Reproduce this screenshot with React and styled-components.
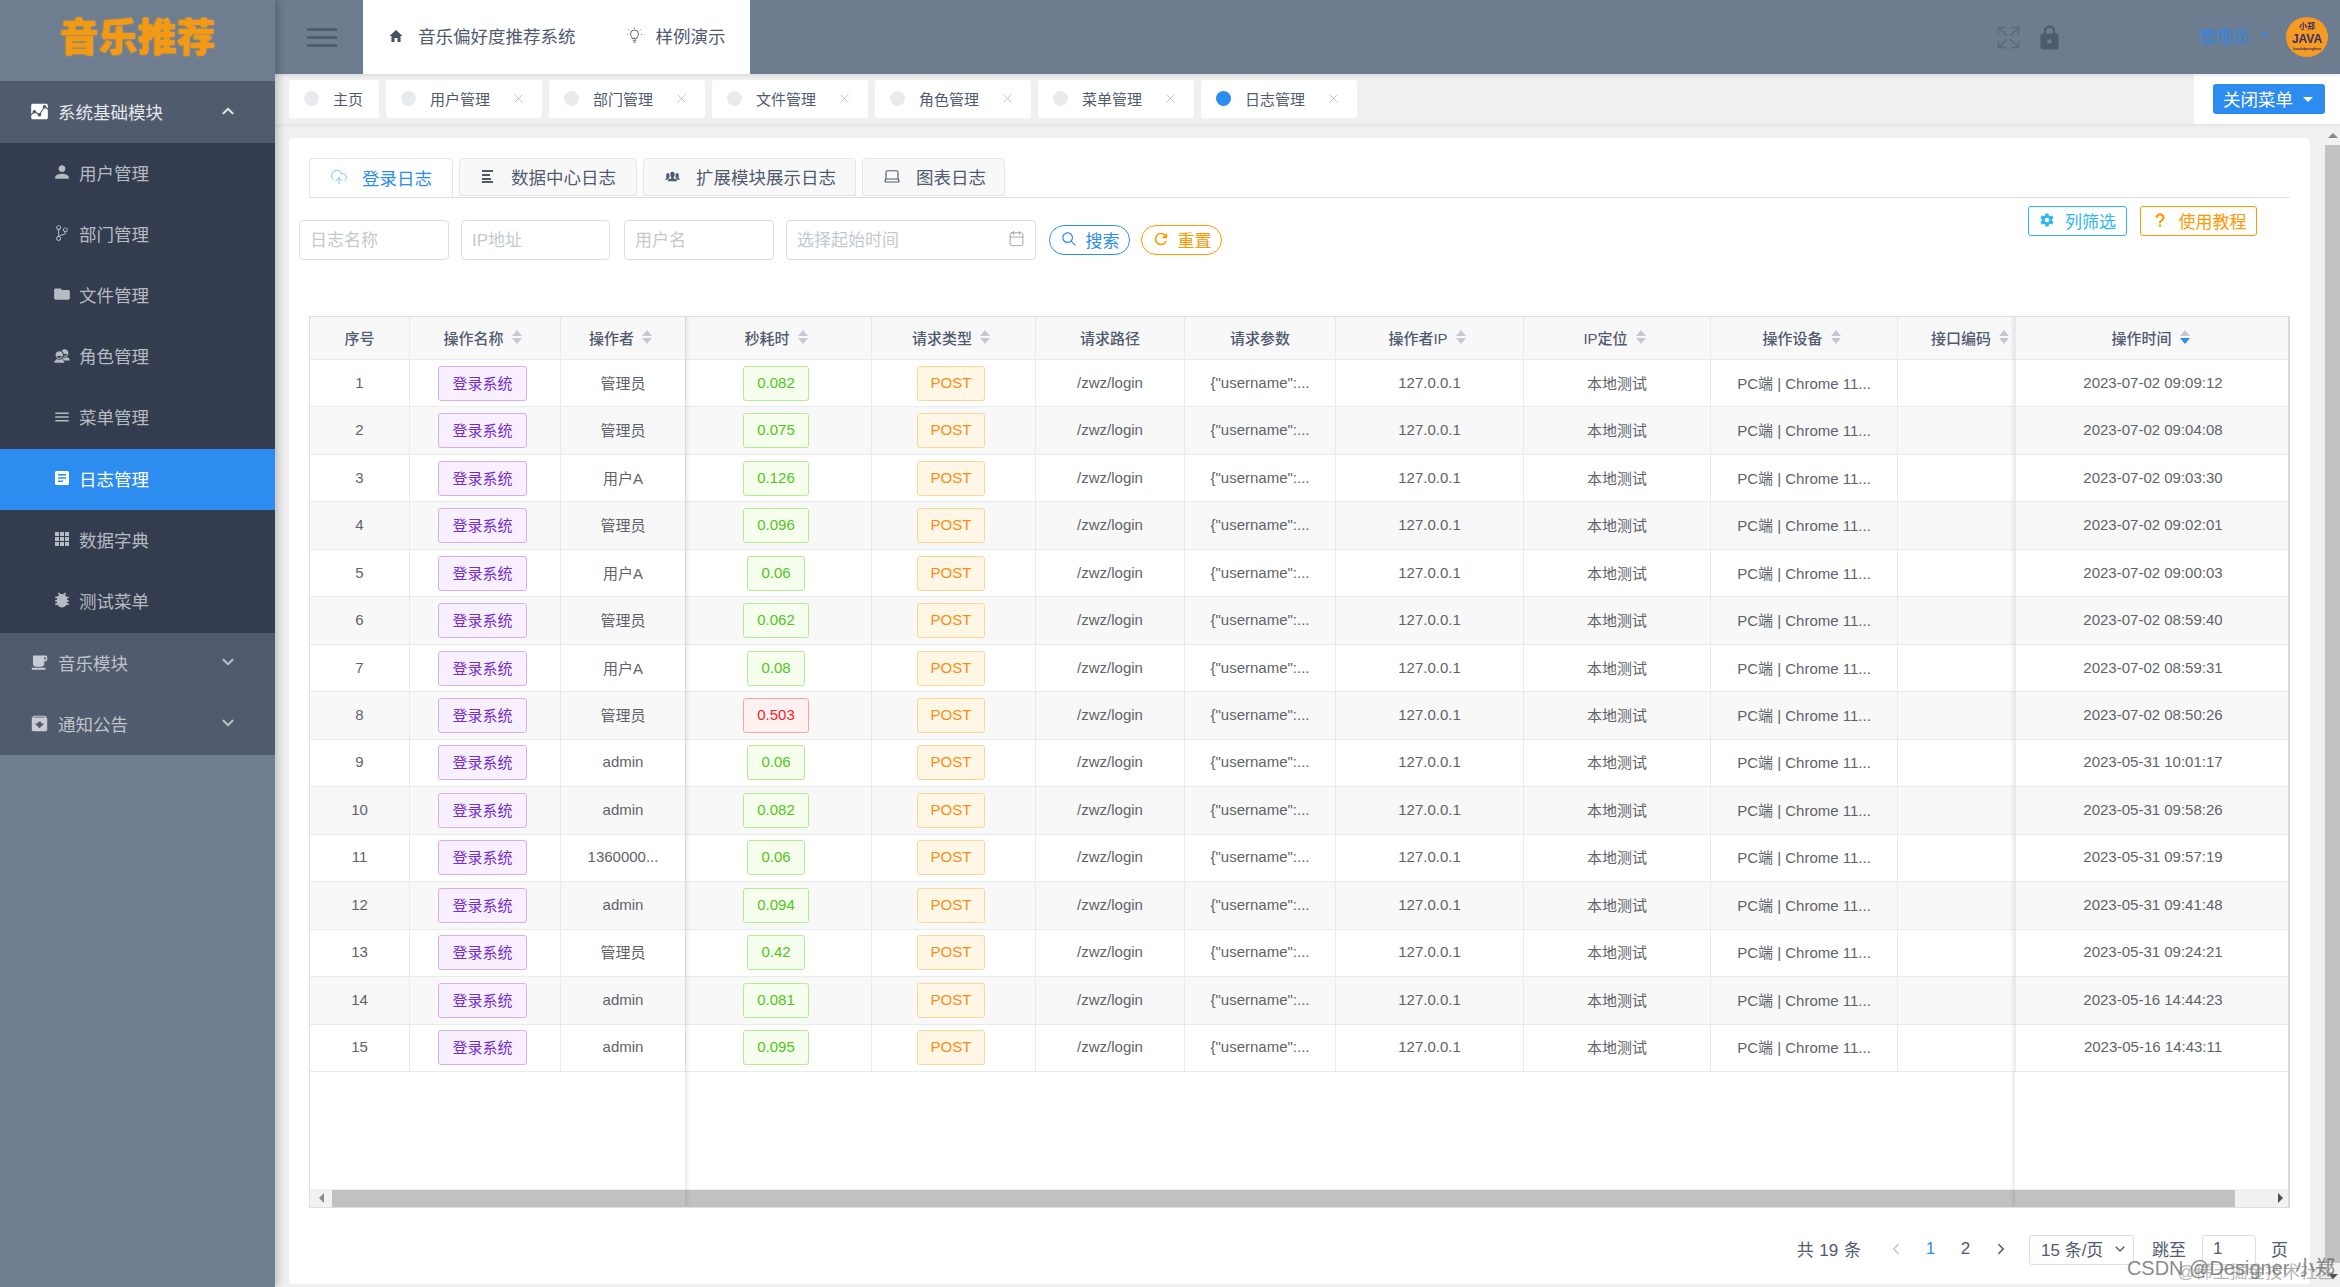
import React from "react";
import styled, { createGlobalStyle } from "styled-components";
import {
  IoMdAnalytics,
  IoMdPerson,
  IoIosGitBranch,
  IoMdFolder,
  IoMdContacts,
  IoMdMenu,
  IoMdBug,
  IoMdCafe,
  IoMdArchive,
  IoIosArrowUp,
  IoIosArrowDown,
  IoIosArrowBack,
  IoIosArrowForward,
  IoMdHome,
  IoMdLock,
  IoMdSettings,
  IoMdHelp,
  IoIosSearch,
  IoMdRefresh,
  IoIosPeople,
  IoIosExpand
} from "react-icons/io";
import { CloudUpload, Laptop, Calendar, X } from "lucide-react";

const FONT = '"Liberation Sans", "Noto Sans CJK SC", sans-serif';

const GlobalStyle = createGlobalStyle`
  html, body {
    margin: 0;
    height: 100%;
    overflow: hidden;
    background: #f0f0f0;
    font-family: ${FONT};
  }
  * {
    box-sizing: border-box;
  }
`;

const Page = styled.div`
  display: flex;
  width: 2340px;
  height: 1287px;
  position: relative;
  overflow: hidden;
`;

/* sidebar */
const Sidebar = styled.aside`
  flex: 0 0 275px;
  background: #6f7d90;
  box-shadow: 3px 0 8px rgba(0, 0, 0, 0.22);
  z-index: 3;
`;

const LogoBox = styled.div`
  height: 81px;
  display: flex;
  align-items: center;
  justify-content: center;
  padding-bottom: 6px;
`;

const LogoText = styled.span`
  color: #f39a12;
  font-size: 39px;
  font-weight: 900;
  line-height: 1;
  text-shadow: 0 0 2px #f6a623;
`;

const SectionHead = styled.div`
  height: ${p => (p.$tall ? "62px" : "61px")};
  display: flex;
  align-items: center;
  padding: 0 39px 2px 30px;
  background: #515b6e;
  color: ${p => (p.$open ? "#e6e8eb" : "#bfc3cb")};
  font-size: 17.5px;

  > svg:first-child {
    font-size: 19px;
    margin-right: 9px;
    color: ${p => (p.$open ? "#fff" : "#c9ccd2")};
  }
  > span {
    flex: 1;
  }
`;

const SubMenu = styled.div`
  background: #343d4f;
`;

const SubItem = styled.div`
  height: 61.2px;
  display: flex;
  align-items: center;
  padding: 0 0 3px 53px;
  font-size: 17.5px;
  color: ${p => (p.$active ? "#fff" : "#b5bac3")};
  background: ${p => (p.$active ? "#2d8cf0" : "transparent")};

  > svg {
    flex: 0 0 18px;
    font-size: 18px;
    margin-right: 8px;
  }
`;

/* top */
const Main = styled.div`
  flex: 1;
  min-width: 0;
  display: flex;
  flex-direction: column;
`;

const Header = styled.header`
  flex: 0 0 74px;
  display: flex;
  align-items: center;
  background: #6e7c8f;
  box-shadow: 0 1px 4px rgba(0, 0, 0, 0.12);
  z-index: 2;
`;

const Hamburger = styled.div`
  flex: 0 0 88px;
  height: 100%;
  display: flex;
  flex-direction: column;
  justify-content: center;
  gap: 5px;
  padding-left: 32px;
`;

const HamburgerBar = styled.i`
  display: block;
  width: 30px;
  height: 3px;
  background: #4f5c6e;
`;

const NavBox = styled.nav`
  flex: 0 0 387px;
  height: 100%;
  background: #fff;
  display: flex;
  align-items: center;
  padding: 0 0 3px 25px;
  font-size: 17.5px;
  color: #515a6e;
`;

const NavLink = styled.span`
  display: flex;
  align-items: center;
  margin-right: ${p => p.$gap || 0}px;

  > svg {
    margin-right: ${p => p.$iconGap}px;
  }
`;

const HeaderRight = styled.div`
  flex: 1;
  display: flex;
  align-items: center;
  justify-content: flex-end;
  padding-right: 12px;
`;

const ExpandIcon = styled(IoIosExpand)`
  font-size: 29px;
  color: #5c6a7c;
  margin-right: 12px;
`;

const LockIcon = styled(IoMdLock)`
  font-size: 29px;
  color: #4e5b6f;
  margin-right: 135px;
`;

const UserName = styled.span`
  color: #2d86e8;
  font-size: 17px;
  margin-top: -4px;
`;

const Caret = styled.i`
  display: block;
  width: 0;
  height: 0;
  border-left: ${p => p.$size || 4}px solid transparent;
  border-right: ${p => p.$size || 4}px solid transparent;
  border-top: ${p => p.$size || 4}px solid ${p => p.$color || "#2d86e8"};
  margin: ${p => p.$margin || "0"};
`;

const Avatar = styled.div`
  width: 42px;
  height: 40px;
  border-radius: 50%;
  background: #f59b23;
  color: #3c2f63;
  display: flex;
  flex-direction: column;
  align-items: center;
  justify-content: center;
  line-height: 1;
`;

const AvatarTop = styled.span`
  font-size: 8px;
  font-weight: 700;
`;

const AvatarMain = styled.span`
  font-size: 12px;
  font-weight: 700;
  margin: 2px 0;
`;

const AvatarFoot = styled.span`
  font-size: 4px;
  font-weight: 700;
`;

/* open pages strip */
const PageTabBar = styled.div`
  flex: 0 0 50px;
  display: flex;
  background: #f0f0f0;
  box-shadow: 0 2px 3px rgba(0, 0, 0, 0.05);
  z-index: 1;
`;

const PageTabs = styled.div`
  flex: 1;
  display: flex;
  gap: 7px;
  padding: 6px 0 0 14px;
`;

const PageTab = styled.div`
  height: 38px;
  display: flex;
  align-items: center;
  padding: 0 16px 2px 15px;
  background: #fff;
  border-radius: 3px;
  font-size: 15px;
  color: #515a6e;

  > svg {
    margin-left: 21px;
    color: #9ea3ab;
  }
`;

const PageDot = styled.i`
  width: 15px;
  height: 15px;
  border-radius: 50%;
  margin-right: 14px;
  background: ${p => (p.$active ? "#2d8cf0" : "#e8eaec")};
`;

const CloseBox = styled.div`
  flex: 0 0 146px;
  background: #fff;
  padding: 10px 0 0 19px;
`;

const CloseButton = styled.div`
  width: 112px;
  height: 30px;
  display: flex;
  align-items: center;
  padding: 0 0 2px 10px;
  background: #2d8cf0;
  border-radius: 3px;
  color: #fff;
  font-size: 17.5px;
`;

/* content */
const Body = styled.div`
  flex: 1;
  min-height: 0;
  display: flex;
`;

const CardArea = styled.div`
  flex: 1;
  min-width: 0;
  padding: 14px 15px 3px 14px;
`;

const Card = styled.main`
  height: 100%;
  background: #fff;
  border-radius: 4px;
  padding: 20px 20px 0;
  display: flex;
  flex-direction: column;
`;

const VScroll = styled.div`
  flex: 0 0 15px;
  background: #f1f1f1;
  display: flex;
  flex-direction: column;
  align-items: center;
`;

const VThumb = styled.div`
  width: 15px;
  height: 1118px;
  background: #c1c1c1;
`;

const UpArrow = styled.i`
  width: 0;
  height: 0;
  margin: 9px 0 7px;
  border-left: 5px solid transparent;
  border-right: 5px solid transparent;
  border-bottom: 5px solid #8a8a8a;
`;

const DownArrow = styled.i`
  width: 0;
  height: 0;
  margin-top: 11px;
  border-left: 5px solid transparent;
  border-right: 5px solid transparent;
  border-top: 5px solid #505050;
`;

const TabStrip = styled.div`
  flex: 0 0 39px;
  display: flex;
  gap: 6px;
  border-bottom: 1px solid #dcdee2;
`;

const TabItem = styled.div`
  height: ${p => (p.$active ? "39px" : "38px")};
  display: flex;
  align-items: center;
  padding: 0 ${p => p.$right || 20}px 2px 20px;
  border: 1px solid #e4e6ea;
  border-bottom: ${p => (p.$active ? "0" : "1px solid #e4e6ea")};
  border-radius: 4px 4px 0 0;
  background: ${p => (p.$active ? "#fff" : "#f8f8f9")};
  color: ${p => (p.$active ? "#2d8cf0" : "#515a6e")};
  font-size: 17.5px;

  > svg {
    margin-right: ${p => p.$gap || 15}px;
  }
`;

const FilterArea = styled.div`
  flex: 0 0 118px;
  display: flex;
  justify-content: space-between;
  align-items: flex-start;
`;

const FilterLeft = styled.div`
  display: flex;
  align-items: center;
  margin: 22px 0 0 -10px;
`;

const FilterRight = styled.div`
  display: flex;
  gap: 13px;
  margin: 8px 33px 0 0;
`;

const Field = styled.div`
  width: ${p => p.$width}px;
  height: 40px;
  margin-right: ${p => p.$gap}px;
  display: flex;
  align-items: center;
  justify-content: space-between;
  padding: 0 10px 3px;
  border: 1px solid #dcdee2;
  border-radius: 4px;
  color: #c5c8ce;
  font-size: 17px;
`;

const PillButton = styled.div`
  width: ${p => p.$width}px;
  height: 30px;
  margin-right: ${p => p.$gap || 0}px;
  display: flex;
  align-items: center;
  justify-content: center;
  gap: 8px;
  padding-bottom: 2px;
  border: 1px solid ${p => p.$color};
  border-radius: 15px;
  color: ${p => p.$color};
  font-size: 17px;
`;

const GhostButton = styled.div`
  width: ${p => p.$width}px;
  height: 30px;
  display: flex;
  align-items: center;
  justify-content: center;
  gap: 10px;
  padding-bottom: 2px;
  border: 1px solid ${p => p.$color};
  border-radius: 3px;
  color: ${p => p.$color};
  font-size: 17px;
`;

/* table */
const TableBox = styled.div`
  flex: 0 0 892px;
  position: relative;
  display: flex;
  flex-direction: column;
  border: 1px solid #dcdee2;
  border-right: 2px solid #d8dadd;
  overflow: hidden;
`;

const Row = styled.div`
  flex: 0 0 ${p => (p.$head ? "43px" : "47.47px")};
  display: flex;
  background: ${p => (p.$head || p.$striped ? "#f8f8f9" : "#fff")};
  border-bottom: 1px solid #e8eaec;
`;

const Cell = styled.div`
  flex: 0 0 ${p => p.$width}px;
  min-width: 0;
  display: flex;
  align-items: center;
  justify-content: center;
  padding: 0 0 2px ${p => p.$shift || 0}px;
  border-right: ${p => (p.$last ? "0" : "1px solid #e8eaec")};
  color: #5f6368;
  font-size: 15px;
  white-space: nowrap;
  overflow: hidden;
`;

const HeadLabel = styled.span`
  color: #515a6e;
  font-weight: 500;
`;

const SortBox = styled.span`
  display: flex;
  flex-direction: column;
  gap: 2px;
  margin: 0 5px 0 8px;
`;

const SortUp = styled.i`
  width: 0;
  height: 0;
  border-left: 5px solid transparent;
  border-right: 5px solid transparent;
  border-bottom: 6px solid #c5c8ce;
`;

const SortDown = styled.i`
  width: 0;
  height: 0;
  border-left: 5px solid transparent;
  border-right: 5px solid transparent;
  border-top: 6px solid ${p => (p.$active ? "#2d8cf0" : "#c5c8ce")};
`;

const tagColors = {
  purple: ["#f9f0ff", "#d3adf7", "#722ed1"],
  green: ["#f6ffed", "#b7eb8f", "#52c41a"],
  red: ["#fff1f0", "#ffa39e", "#f5222d"],
  orange: ["#fff7e6", "#ffd591", "#fa8c16"]
};

const Tag = styled.span`
  height: 35px;
  display: inline-flex;
  align-items: center;
  margin: 2px 5px 0 0;
  padding: 0 13px 2px;
  border-radius: 3px;
  border: 1px solid ${p => tagColors[p.$kind][1]};
  background: ${p => tagColors[p.$kind][0]};
  color: ${p => tagColors[p.$kind][2]};
`;

const TableBlank = styled.div`
  flex: 1;
`;

const HScroll = styled.div`
  flex: 0 0 18px;
  display: flex;
  align-items: center;
  background: #f1f1f1;
`;

const HArrowBox = styled.div`
  flex: 0 0 ${p => p.$width}px;
  display: flex;
  align-items: center;
  justify-content: ${p => (p.$end ? "flex-end" : "center")};
  padding-right: ${p => (p.$end ? "5px" : "0")};
`;

const HThumb = styled.div`
  flex: 1;
  height: 17px;
  background: #c1c1c1;
`;

const LeftArrow = styled.i`
  width: 0;
  height: 0;
  border-top: 5px solid transparent;
  border-bottom: 5px solid transparent;
  border-right: 5px solid #8a8a8a;
`;

const RightArrow = styled.i`
  width: 0;
  height: 0;
  border-top: 5px solid transparent;
  border-bottom: 5px solid transparent;
  border-left: 5px solid #505050;
`;

const FixedEdge = styled.div`
  position: absolute;
  top: 0;
  bottom: 1px;
  left: ${p => p.$left}px;
  width: 5px;
  background: linear-gradient(
    ${p => (p.$flip ? "to left" : "to right")},
    rgba(0, 0, 0, 0.08),
    rgba(0, 0, 0, 0)
  );
  transform: translateX(${p => (p.$flip ? "-5px" : "0")});
`;

/* pagination */
const Pager = styled.div`
  display: flex;
  align-items: center;
  justify-content: flex-end;
  height: 30px;
  margin-top: 27px;
  padding: 0 2px 3px 0;
  color: #515a6e;
  font-size: 17px;
`;

const PagerTotal = styled.span`
  margin-right: 17px;
  word-spacing: 1px;
`;

const PagerItem = styled.span`
  width: 35px;
  display: flex;
  justify-content: center;
  color: ${p => (p.$active ? "#2d8cf0" : p.$muted ? "#c5c8ce" : "#515a6e")};
`;

const PagerSelect = styled.div`
  width: 105px;
  height: 30px;
  margin: 3px 18px 0 11px;
  display: flex;
  align-items: center;
  justify-content: space-between;
  padding: 0 6px 3px 11px;
  border: 1px solid #dcdee2;
  border-radius: 3px;
`;

const PagerInput = styled.div`
  width: 54px;
  height: 30px;
  margin: 3px 15px 0 16px;
  display: flex;
  align-items: center;
  padding: 0 0 3px 10px;
  border: 1px solid #dcdee2;
  border-radius: 3px;
`;

const Watermark = styled.span`
  position: absolute;
  right: ${p => p.$right}px;
  bottom: ${p => p.$bottom}px;
  font-size: ${p => p.$size}px;
  color: ${p => p.$color};
  white-space: nowrap;
  line-height: 1;
`;

const DocIcon = () => (
  <svg viewBox="0 0 18 18" width="18" height="18">
    <path
      fillRule="evenodd"
      fill="currentColor"
      d="M3.5 2h11A1.5 1.5 0 0 1 16 3.5v11a1.5 1.5 0 0 1-1.5 1.5h-11A1.5 1.5 0 0 1 2 14.5v-11A1.5 1.5 0 0 1 3.5 2zM5 5v1.6h8V5zM5 8.2v1.6h8V8.2zM5 11.4V13h5v-1.6z"
    />
  </svg>
);

const GridIcon = () => (
  <svg viewBox="0 0 18 18" width="18" height="18" fill="currentColor">
    {[2, 7, 12].map(y =>
      [2, 7, 12].map(x => <rect key={`${x}-${y}`} x={x} y={y} width="4" height="4" />)
    )}
  </svg>
);

const BulbIcon = () => (
  <svg viewBox="0 0 18 18" width="17" height="17" fill="none" stroke="#515a6e" strokeWidth="1">
    <path d="M6.4 12c0-1.8-1.6-2.4-1.6-4.6a4.2 4.2 0 0 1 8.4 0c0 2.2-1.6 2.8-1.6 4.6z" />
    <path d="M7 14h4M7.6 16h2.8" />
    <path d="M9 0.5v1.2M2.6 2.6l.9.9M15.4 2.6l-.9.9M1 8h1M16 8h1" />
  </svg>
);

const ListLines = () => (
  <svg width="15" height="14" viewBox="0 0 15 14" fill="#515a6e">
    <rect x="2" y="1" width="11" height="2" />
    <rect x="2" y="5" width="8" height="2" />
    <rect x="2" y="9" width="9" height="2" />
    <rect x="2" y="12" width="11" height="2" />
  </svg>
);

const menuItems = [
  { icon: IoMdPerson, label: "用户管理" },
  { icon: IoIosGitBranch, label: "部门管理" },
  { icon: IoMdFolder, label: "文件管理" },
  { icon: IoMdContacts, label: "角色管理" },
  { icon: IoMdMenu, label: "菜单管理" },
  { icon: DocIcon, label: "日志管理", active: true },
  { icon: GridIcon, label: "数据字典" },
  { icon: IoMdBug, label: "测试菜单" }
];

const openPages = ["用户管理", "部门管理", "文件管理", "角色管理", "菜单管理", "日志管理"];

const columns = [
  { title: "序号", width: 100 },
  { title: "操作名称", width: 151, sort: true },
  { title: "操作者", width: 125, sort: true },
  { title: "秒耗时", width: 186, sort: true },
  { title: "请求类型", width: 164, sort: true },
  { title: "请求路径", width: 149 },
  { title: "请求参数", width: 151 },
  { title: "操作者IP", width: 188, sort: true },
  { title: "IP定位", width: 187, sort: true },
  { title: "操作设备", width: 187, sort: true },
  { title: "接口编码", width: 118, sort: true, shift: 32 },
  { title: "操作时间", width: 274, sort: true, active: true, last: true }
];

const logs = [
  ["管理员", "0.082", "2023-07-02 09:09:12"],
  ["管理员", "0.075", "2023-07-02 09:04:08"],
  ["用户A", "0.126", "2023-07-02 09:03:30"],
  ["管理员", "0.096", "2023-07-02 09:02:01"],
  ["用户A", "0.06", "2023-07-02 09:00:03"],
  ["管理员", "0.062", "2023-07-02 08:59:40"],
  ["用户A", "0.08", "2023-07-02 08:59:31"],
  ["管理员", "0.503", "2023-07-02 08:50:26"],
  ["admin", "0.06", "2023-05-31 10:01:17"],
  ["admin", "0.082", "2023-05-31 09:58:26"],
  ["1360000...", "0.06", "2023-05-31 09:57:19"],
  ["admin", "0.094", "2023-05-31 09:41:48"],
  ["管理员", "0.42", "2023-05-31 09:24:21"],
  ["admin", "0.081", "2023-05-16 14:44:23"],
  ["admin", "0.095", "2023-05-16 14:43:11"]
];

const LogRow = ({ index, operator, cost, time }) => {
  const w = i => columns[i].width;
  return (
    <Row $striped={index % 2 === 1}>
      <Cell $width={w(0)}>{index + 1}</Cell>
      <Cell $width={w(1)}>
        <Tag $kind="purple">登录系统</Tag>
      </Cell>
      <Cell $width={w(2)}>{operator}</Cell>
      <Cell $width={w(3)}>
        <Tag $kind={parseFloat(cost) > 0.5 ? "red" : "green"}>{cost}</Tag>
      </Cell>
      <Cell $width={w(4)}>
        <Tag $kind="orange">POST</Tag>
      </Cell>
      <Cell $width={w(5)}>/zwz/login</Cell>
      <Cell $width={w(6)}>{'{"username":...'}</Cell>
      <Cell $width={w(7)}>127.0.0.1</Cell>
      <Cell $width={w(8)}>本地测试</Cell>
      <Cell $width={w(9)}>PC端 | Chrome 11...</Cell>
      <Cell $width={w(10)} />
      <Cell $width={w(11)} $last>
        {time}
      </Cell>
    </Row>
  );
};

const App = () => (
  <Page>
    <GlobalStyle />
    <Sidebar>
      <LogoBox>
        <LogoText>音乐推荐</LogoText>
      </LogoBox>
      <SectionHead $open $tall>
        <IoMdAnalytics />
        <span>系统基础模块</span>
        <IoIosArrowUp size={16} stroke="currentColor" strokeWidth={24} />
      </SectionHead>
      <SubMenu>
        {menuItems.map(({ icon: Icon, label, active }) => (
          <SubItem key={label} $active={active}>
            <Icon />
            {label}
          </SubItem>
        ))}
      </SubMenu>
      <SectionHead>
        <IoMdCafe />
        <span>音乐模块</span>
        <IoIosArrowDown size={16} stroke="currentColor" strokeWidth={24} />
      </SectionHead>
      <SectionHead>
        <IoMdArchive />
        <span>通知公告</span>
        <IoIosArrowDown size={16} stroke="currentColor" strokeWidth={24} />
      </SectionHead>
    </Sidebar>
    <Main>
      <Header>
        <Hamburger>
          <HamburgerBar />
          <HamburgerBar />
          <HamburgerBar />
        </Hamburger>
        <NavBox>
          <NavLink $gap={50} $iconGap={14}>
            <IoMdHome size={16} color="#4a5064" />
            音乐偏好度推荐系统
          </NavLink>
          <NavLink $iconGap={13}>
            <BulbIcon />
            样例演示
          </NavLink>
        </NavBox>
        <HeaderRight>
          <ExpandIcon />
          <LockIcon />
          <UserName>管理员</UserName>
          <Caret $margin="-4px 17px 0 11px" />
          <Avatar>
            <AvatarTop>小郑</AvatarTop>
            <AvatarMain>JAVA</AvatarMain>
            <AvatarFoot>bookdproghcn</AvatarFoot>
          </Avatar>
        </HeaderRight>
      </Header>
      <PageTabBar>
        <PageTabs>
          <PageTab>
            <PageDot />
            主页
          </PageTab>
          {openPages.map(name => (
            <PageTab key={name}>
              <PageDot $active={name === "日志管理"} />
              {name}
              <X size={15} strokeWidth={1} />
            </PageTab>
          ))}
        </PageTabs>
        <CloseBox>
          <CloseButton>
            关闭菜单
            <Caret $size={5} $color="#fff" $margin="2px 0 0 10px" />
          </CloseButton>
        </CloseBox>
      </PageTabBar>
      <Body>
        <CardArea>
          <Card>
            <TabStrip>
              <TabItem $active $gap={14}>
                <CloudUpload size={18} strokeWidth={1} color="#5aa6f2" />
                登录日志
              </TabItem>
              <TabItem $gap={16}>
                <ListLines />
                数据中心日志
              </TabItem>
              <TabItem $right={19}>
                <IoIosPeople size={17} color="#515a6e" />
                扩展模块展示日志
              </TabItem>
              <TabItem $right={18}>
                <Laptop size={18} strokeWidth={1.5} />
                图表日志
              </TabItem>
            </TabStrip>
            <FilterArea>
              <FilterLeft>
                <Field $width={150} $gap={12}>
                  日志名称
                </Field>
                <Field $width={149} $gap={14}>
                  IP地址
                </Field>
                <Field $width={150} $gap={12}>
                  用户名
                </Field>
                <Field $width={250} $gap={13}>
                  选择起始时间
                  <Calendar size={17} strokeWidth={1} color="#808695" />
                </Field>
                <PillButton $width={81} $gap={11} $color="#2d8cf0">
                  <IoIosSearch size={18} />
                  搜索
                </PillButton>
                <PillButton $width={81} $color="#ff9900">
                  <IoMdRefresh size={18} />
                  重置
                </PillButton>
              </FilterLeft>
              <FilterRight>
                <GhostButton $width={99} $color="#2db7f5">
                  <IoMdSettings size={16} />
                  列筛选
                </GhostButton>
                <GhostButton $width={117} $color="#ff9900">
                  <IoMdHelp size={18} />
                  使用教程
                </GhostButton>
              </FilterRight>
            </FilterArea>
            <TableBox>
              <Row $head>
                {columns.map(col => (
                  <Cell key={col.title} $width={col.width} $shift={col.shift} $last={col.last}>
                    <HeadLabel>{col.title}</HeadLabel>
                    {col.sort && (
                      <SortBox>
                        <SortUp />
                        <SortDown $active={col.active} />
                      </SortBox>
                    )}
                  </Cell>
                ))}
              </Row>
              {logs.map(([operator, cost, time], i) => (
                <LogRow key={time} index={i} operator={operator} cost={cost} time={time} />
              ))}
              <TableBlank />
              <HScroll>
                <HArrowBox $width={22}>
                  <LeftArrow />
                </HArrowBox>
                <HThumb />
                <HArrowBox $width={53} $end>
                  <RightArrow />
                </HArrowBox>
              </HScroll>
              <FixedEdge $left={375} />
              <FixedEdge $left={1705} $flip />
            </TableBox>
            <Pager>
              <PagerTotal>共 19 条</PagerTotal>
              <PagerItem $muted>
                <IoIosArrowBack size={16} />
              </PagerItem>
              <PagerItem $active>1</PagerItem>
              <PagerItem>2</PagerItem>
              <PagerItem>
                <IoIosArrowForward size={16} />
              </PagerItem>
              <PagerSelect>
                15 条/页
                <IoIosArrowDown size={14} />
              </PagerSelect>
              跳至
              <PagerInput>1</PagerInput>页
            </Pager>
          </Card>
        </CardArea>
        <VScroll>
          <UpArrow />
          <VThumb />
          <DownArrow />
        </VScroll>
      </Body>
    </Main>
    <Watermark $right={5} $bottom={9} $size={20} $color="rgba(90,90,90,0.72)">
      CSDN @Designer 小郑
    </Watermark>
    <Watermark $right={5} $bottom={6} $size={17.5} $color="rgba(120,120,120,0.55)">
      @稀土掘金技术社区
    </Watermark>
  </Page>
);

export default App;
